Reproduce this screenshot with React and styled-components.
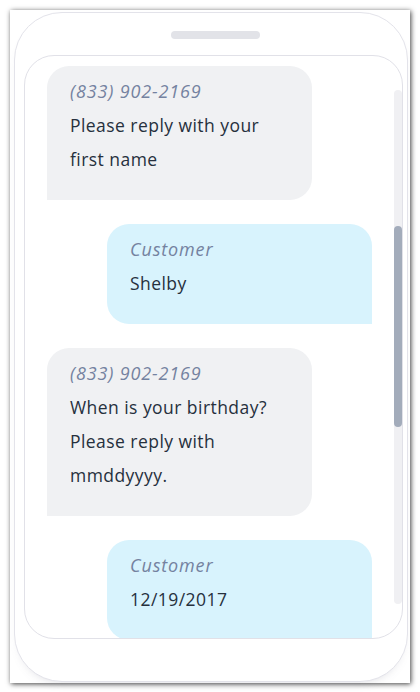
import styled, { createGlobalStyle } from "styled-components";

const GlobalStyle = createGlobalStyle`
  * { box-sizing: border-box; }
  body {
    margin: 0;
    background: #ffffff;
    font-family: "Open Sans", "Lato", sans-serif;
  }
`;

const MESSAGES = [
  { from: "bot", sender: "(833) 902-2169", lines: ["Please reply with your", "first name"] },
  { from: "customer", sender: "Customer", lines: ["Shelby"] },
  {
    from: "bot",
    sender: "(833) 902-2169",
    lines: ["When is your birthday?", "Please reply with", "mmddyyyy."],
  },
  { from: "customer", sender: "Customer", lines: ["12/19/2017"] },
];

const Frame = styled.div`
  margin: 10px;
  width: 400px;
  height: 673px;
  background: #ffffff;
  box-shadow: 1px 1px 5px rgba(0, 0, 0, 0.75);
  padding: 2px 2px 1px 4px;
  display: flex;
`;

const Phone = styled.div`
  flex: 1;
  display: flex;
  flex-direction: column;
  align-items: center;
  border: 1px solid #e3e3ea;
  border-radius: 48px;
  padding: 0 4px 42px 9px;
  background: #ffffff;
  box-shadow: 0 6px 10px -6px rgba(120, 120, 140, 0.25);
`;

const Notch = styled.div`
  width: 89px;
  height: 8px;
  border-radius: 4px;
  background: #e2e3e8;
  margin: 18px 0 16px 4px;
`;

const Screen = styled.div`
  align-self: stretch;
  flex: 1;
  display: flex;
  border: 1px solid #e1e1e8;
  border-radius: 30px;
  overflow: hidden;
`;

const List = styled.div`
  flex: 1;
  display: flex;
  flex-direction: column;
  gap: 24px;
  padding: 10px 22px 0 22px;
`;

const Bubble = styled.div`
  width: 265px;
  padding: 8px 23px 24px;
  align-self: ${(p) => (p.$customer ? "flex-end" : "flex-start")};
  background: ${(p) => (p.$customer ? "#d8f3fd" : "#f0f1f3")};
  border-radius: ${(p) => (p.$customer ? "22px 22px 0 22px" : "22px 22px 22px 0")};
  flex-shrink: 0;
`;

const Sender = styled.div`
  font-style: italic;
  font-size: 18px;
  letter-spacing: 0.85px;
  line-height: 34px;
  color: #7482a0;
`;

const Line = styled.div`
  font-size: 17.5px;
  letter-spacing: 0.45px;
  line-height: 34px;
  color: #26303d;
`;

const Track = styled.div`
  width: 8px;
  margin: 34px 0 34px;
  border-radius: 4px;
  background: #f0f0f3;
  display: flex;
  flex-direction: column;
`;

const Thumb = styled.div`
  margin-top: 136px;
  height: 201px;
  border-radius: 4px;
  background: #a3acbb;
`;

export default function App() {
  return (
    <>
      <GlobalStyle />
      <Frame>
        <Phone>
          <Notch />
          <Screen>
            <List>
              {MESSAGES.map((m, i) => (
                <Bubble key={i} $customer={m.from === "customer"}>
                  <Sender>{m.sender}</Sender>
                  {m.lines.map((l) => (
                    <Line key={l}>{l}</Line>
                  ))}
                </Bubble>
              ))}
            </List>
            <Track>
              <Thumb />
            </Track>
          </Screen>
        </Phone>
      </Frame>
    </>
  );
}
